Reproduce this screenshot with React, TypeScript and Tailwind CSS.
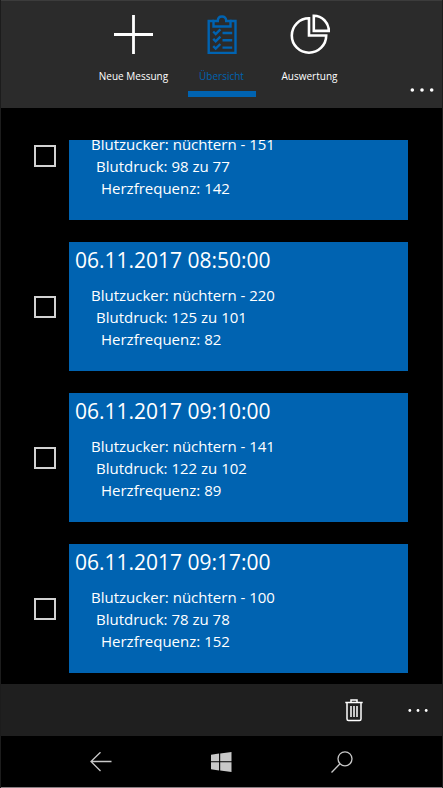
import type { ReactNode } from "react";

type Messung = {
  id: number;
  datum?: string;
  blutzucker: string;
  blutdruck: string;
  herzfrequenz: number;
};

const messungen: Messung[] = [
  { id: 1, blutzucker: "nüchtern - 151", blutdruck: "98 zu 77", herzfrequenz: 142 },
  { id: 2, datum: "06.11.2017 08:50:00", blutzucker: "nüchtern - 220", blutdruck: "125 zu 101", herzfrequenz: 82 },
  { id: 3, datum: "06.11.2017 09:10:00", blutzucker: "nüchtern - 141", blutdruck: "122 zu 102", herzfrequenz: 89 },
  { id: 4, datum: "06.11.2017 09:17:00", blutzucker: "nüchtern - 100", blutdruck: "78 zu 78", herzfrequenz: 152 },
];

function PlusIcon() {
  return (
    <svg width="40" height="40" viewBox="0 0 40 40" stroke="currentColor" strokeWidth="2.8" aria-hidden="true">
      <path d="M19.5 1v39M0 20.5h39" />
    </svg>
  );
}

function ClipboardIcon() {
  return (
    <svg width="40" height="40" viewBox="0 0 40 40" fill="none" stroke="currentColor" strokeWidth="2.4" aria-hidden="true">
      <path d="M12 7H6.700v32H33.500V7H28" />
      <path d="M11.500 7v5.500h17V7h-4.300C24.200 4 22.500 2.500 20 2.500S15.800 4 15.800 7z" />
      <path d="M20.500 19h9.700M20.500 26.300h9.700M20.500 33.600h9.700" />
      <path d="M11.200 17.500l2.500 2.500 4.700-4.600M11.200 24.800l2.500 2.500 4.700-4.600M11.200 32.100l2.500 2.500 4.700-4.600" />
    </svg>
  );
}

function PieIcon() {
  return (
    <svg width="40" height="40" viewBox="0 0 40 40" fill="none" stroke="currentColor" strokeWidth="2.6" aria-hidden="true">
      <path d="M19 4.300A17.200 17.200 0 1 0 36.200 21.500H19z" />
      <path d="M23.800 1.800V16.900H38.900A15.300 15.300 0 0 0 23.800 1.800z" />
    </svg>
  );
}

function DotsIcon() {
  return (
    <svg width="24" height="6" viewBox="0 0 24 6" fill="currentColor" aria-hidden="true">
      <circle cx="2.3" cy="3" r="1.8" />
      <circle cx="12" cy="3" r="1.8" />
      <circle cx="21.7" cy="3" r="1.8" />
    </svg>
  );
}

function SmallDotsIcon() {
  return (
    <svg width="20" height="6" viewBox="0 0 20 6" fill="currentColor" aria-hidden="true">
      <circle cx="1.8" cy="3.5" r="1.4" />
      <circle cx="10" cy="3.5" r="1.4" />
      <circle cx="18.2" cy="3.5" r="1.4" />
    </svg>
  );
}

function TrashIcon() {
  return (
    <svg width="18" height="24" viewBox="0 0 18 24" fill="none" stroke="currentColor" strokeWidth="1.5" aria-hidden="true">
      <path d="M0.300 4.500h17.400M6 4.500V2h6v2.500" />
      <path d="M2 4.500V21a1.500 1.500 0 0 0 1.500 1.500h11A1.500 1.500 0 0 0 16 21V4.500" />
      <path d="M6 8v11M9 8v11M12 8v11" />
    </svg>
  );
}

function BackIcon() {
  return (
    <svg width="22" height="20" viewBox="0 0 22 20" fill="none" stroke="currentColor" strokeWidth="1.3" aria-hidden="true">
      <path d="M21.500 9.500H1M10.500 0.200L1 9.500l9.500 9.500" />
    </svg>
  );
}

function WindowsIcon() {
  return (
    <svg width="21" height="20" viewBox="0 0 21 20" fill="currentColor" aria-hidden="true">
      <path d="M0 2.700L8.100 1.600V9.200H0zM9.200 1.400L20.500 0V9.200H9.200zM0 10.200H8.100V18.400L0 17.300zM9.200 10.200H20.500V20L9.200 18.500z" />
    </svg>
  );
}

function SearchIcon() {
  return (
    <svg width="22" height="22" viewBox="0 0 22 22" fill="none" stroke="currentColor" strokeWidth="1.3" aria-hidden="true">
      <circle cx="14" cy="7.8" r="7" />
      <path d="M9 12.800L0.500 21.500" />
    </svg>
  );
}

function Tab({ icon, label, active = false }: { icon: ReactNode; label: string; active?: boolean }) {
  return (
    <button
      type="button"
      aria-current={active ? "page" : undefined}
      className={
        active
          ? "flex w-22 flex-col items-center text-[#0063b1]"
          : "flex w-22 flex-col items-center text-white"
      }
    >
      {icon}
      <span className="mt-3 text-[10px] leading-5 whitespace-nowrap">{label}</span>
      <span className={active ? "mt-[5px] h-1.5 w-17 bg-[#0063b1]" : "mt-[5px] h-1.5 w-17"} />
    </button>
  );
}

function MessungRow({ messung }: { messung: Messung }) {
  const inputId = `messung-${messung.id}`;

  return (
    <li className="flex items-center">
      <input
        id={inputId}
        type="checkbox"
        className="mr-[13px] size-[22px] shrink-0 appearance-none border-2 border-[#d2d2d2] bg-black checked:bg-[#0063b1]"
      />
      <label htmlFor={inputId} className="block h-[129px] flex-1 bg-[#0063b1] px-1.5 text-white">
        <span className="block h-[34px] pt-0.5 text-[21px] leading-8">{messung.datum}</span>
        <span className="mt-2 block pl-4 text-[15px] leading-[22px]">Blutzucker: {messung.blutzucker}</span>
        <span className="block pl-[21px] text-[15px] leading-[22px]">Blutdruck: {messung.blutdruck}</span>
        <span className="block pl-[26px] text-[15px] leading-[22px]">Herzfrequenz: {messung.herzfrequenz}</span>
      </label>
    </li>
  );
}

export default function App() {
  return (
    <div className="flex min-h-screen flex-col border-x border-[#1c1c1c] bg-black font-['Open_Sans',sans-serif] text-white">
      <header className="grid grid-cols-[1fr_auto_1fr] border-t border-[#3c3c3c] bg-[#2b2b2b] pt-[13px] pb-[11px]">
        <nav className="col-start-2 flex">
          <Tab icon={<PlusIcon />} label="Neue Messung" />
          <Tab icon={<ClipboardIcon />} label="Übersicht" active />
          <Tab icon={<PieIcon />} label="Auswertung" />
        </nav>
        <button type="button" aria-label="Mehr" className="mr-2 self-end justify-self-end py-1">
          <DotsIcon />
        </button>
      </header>

      <main className="flex-1 pt-8 pr-[34px] pb-[11px] pl-[33px]">
        {/* List is scrolled, the first entry is partly cut off */}
        <div className="overflow-hidden">
          <ul className="-mt-[49px] flex flex-col gap-[22px]">
            {messungen.map((messung) => (
              <MessungRow key={messung.id} messung={messung} />
            ))}
          </ul>
        </div>
      </main>

      <div className="flex h-13 items-center justify-end gap-[45px] bg-[#1f1f1f] pr-3.5">
        <button type="button" aria-label="Löschen">
          <TrashIcon />
        </button>
        <button type="button" aria-label="Mehr">
          <SmallDotsIcon />
        </button>
      </div>

      <footer className="flex h-13 items-center justify-center gap-[99px] border-b border-[#8a7f84] text-[#c8c8c8]">
        <button type="button" aria-label="Zurück">
          <BackIcon />
        </button>
        <button type="button" aria-label="Start">
          <WindowsIcon />
        </button>
        <button type="button" aria-label="Suchen">
          <SearchIcon />
        </button>
      </footer>
    </div>
  );
}
